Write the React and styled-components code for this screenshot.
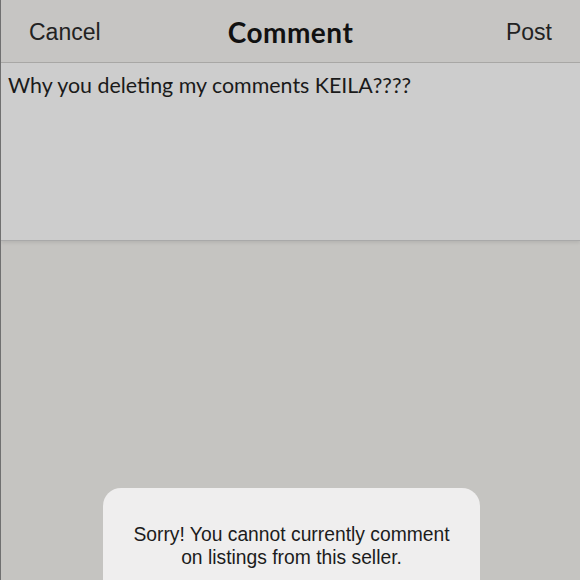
import styled, { createGlobalStyle } from "styled-components";

const Global = createGlobalStyle`
  html, body { margin: 0; padding: 0; }
  body { background: #c5c4c1; }
`;

const Screen = styled.div`
  width: 580px;
  height: 580px;
  overflow: hidden;
  display: flex;
  flex-direction: column;
  background: #c5c4c1;
  border-left: 1px solid #707070;
  box-sizing: border-box;
`;

const NavBar = styled.div`
  height: 63px;
  flex-shrink: 0;
  display: grid;
  grid-template-columns: 1fr auto 1fr;
  align-items: center;
  padding: 3px 28px 0 28px;
  box-sizing: border-box;
  background: #c6c5c3;
  border-bottom: 1px solid #a8a7a5;
`;

const NavButton = styled.div`
  font-family: "Liberation Sans", Arial, sans-serif;
  font-size: 23px;
  color: #222;
  justify-self: ${p => (p.$right ? "end" : "start")};
`;

const Title = styled.div`
  font-family: Lato, "Noto Sans", sans-serif;
  font-weight: 700;
  font-size: 28px;
  letter-spacing: 0.5px;
  color: #111;
  margin-top: -2px;
`;

const Editor = styled.div`
  height: 177px;
  flex-shrink: 0;
  background: #cdcdcd;
  padding: 9px 7px;
  box-sizing: border-box;
  font-family: Lato, "Noto Sans", sans-serif;
  font-size: 21.4px;
  color: #1a1a1a;
  box-shadow: 0 1px 0 #a9a9a9, 0 3px 3px rgba(0, 0, 0, 0.08);
  position: relative;
  z-index: 1;
`;

const Backdrop = styled.div`
  flex: 1;
  display: flex;
  justify-content: center;
  padding-top: 248px;
`;

const Toast = styled.div`
  width: 377px;
  height: 140px;
  flex-shrink: 0;
  margin-left: 2px;
  background: #efeeee;
  border-radius: 18px;
  padding-top: 35px;
  box-sizing: border-box;
  text-align: center;
  font-family: "Liberation Sans", Arial, sans-serif;
  font-size: 19.3px;
  line-height: 23px;
  color: #1c1c1c;
`;

export default function App() {
  return (
    <>
      <Global />
      <Screen>
        <NavBar>
          <NavButton>Cancel</NavButton>
          <Title>Comment</Title>
          <NavButton $right>Post</NavButton>
        </NavBar>
        <Editor>Why you deleting my comments KEILA????</Editor>
        <Backdrop>
          <Toast>
            Sorry! You cannot currently comment
            <br />
            on listings from this seller.
          </Toast>
        </Backdrop>
      </Screen>
    </>
  );
}
